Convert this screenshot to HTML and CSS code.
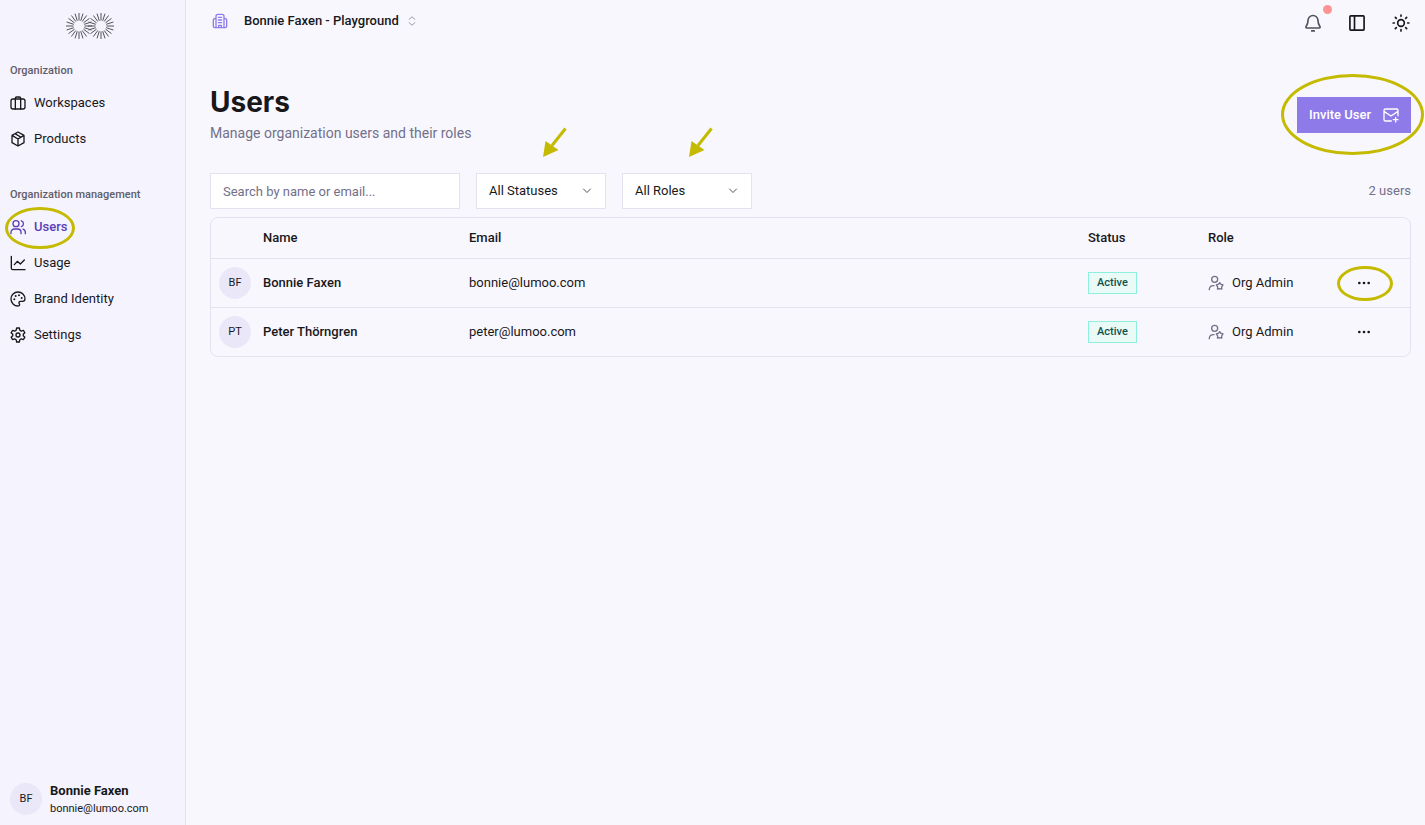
FILE: index.html
```html
<!DOCTYPE html>
<html lang="en">
<head>
    <meta charset="utf-8">
    <title>Users</title>
    <link rel="stylesheet" href="styles.css">
</head>
<body>
    <!-- Shared icon shapes -->
    <svg class="sprite" aria-hidden="true">
        <symbol id="icon-more" viewBox="0 0 24 24">
            <circle cx="5" cy="12" r="2"/><circle cx="12" cy="12" r="2"/><circle cx="19" cy="12" r="2"/>
        </symbol>
        <symbol id="icon-chevron" viewBox="0 0 24 24"><path d="m5 8 7 7 7-7"/></symbol>
        <symbol id="icon-user-star" viewBox="0 0 24 24">
            <circle cx="10" cy="6.5" r="4.5"/>
            <path d="M2 22v-1a6 6 0 0 1 6-5h1"/>
            <path d="m17.5 11.5 1.5 2.2 3.5 1-2 3 .2 3.5-3.2-.8-3.200.8.2-3.500-2-3 3.500-1z"/>
        </symbol>
        <symbol id="icon-arrow" viewBox="0 0 24 30">
            <path d="M22.500 1.500 9 18.500" fill="none" stroke="currentColor" stroke-width="3"/>
            <path d="M0 30 2.500 14 15.500 23z" fill="currentColor"/>
        </symbol>
        <symbol id="burst" viewBox="-14 -14 28 28">
            <g id="burst-quarter">
                <path d="M5.500 0H13M5.200 1.700 12.400 4M4.500 3.200 10.500 7.600M3.200 4.500 7.600 10.500M1.700 5.200 4 12.400"/>
            </g>
            <use href="#burst-quarter" transform="rotate(90)"/>
            <use href="#burst-quarter" transform="rotate(180)"/>
            <use href="#burst-quarter" transform="rotate(270)"/>
        </symbol>
    </svg>

    <div class="app">
        <aside class="sidebar">
            <svg class="logo" viewBox="0 0 50 28" role="img" aria-label="Lumoo">
                <use href="#burst" width="28" height="28"/>
                <use href="#burst" x="22" width="28" height="28"/>
            </svg>

            <nav>
                <h2 class="nav-title">Organization</h2>
                <a class="nav-link" href="#">
                    <svg class="icon" viewBox="0 0 24 24"><rect x="1.500" y="6" width="21" height="15" rx="3"/><path d="M8 21V5a2 2 0 0 1 2-2h4a2 2 0 0 1 2 2v16"/></svg>
                    Workspaces
                </a>
                <a class="nav-link" href="#">
                    <svg class="icon" viewBox="0 0 24 24"><path d="m12 1.500 9 5v11l-9 5-9-5v-11zM3 6.500 12 12l9-5.500M12 12v10M7.500 4l9 5.300"/></svg>
                    Products
                </a>

                <h2 class="nav-title nav-title-second">Organization management</h2>
                <a class="nav-link active" href="#">
                    <svg class="icon" viewBox="0 0 24 24"><circle cx="9" cy="7" r="4.500"/><path d="M1.500 22v-2a5 5 0 0 1 5-5h5a5 5 0 0 1 5 5v2M17 2.700a4.500 4.500 0 0 1 0 8.600M19.500 15.200a5 5 0 0 1 3.500 4.800v2"/></svg>
                    Users
                    <span class="ring ring-nav"></span>
                </a>
                <a class="nav-link" href="#">
                    <svg class="icon" viewBox="0 0 24 24"><path d="M2 2v18a2 2 0 0 0 2 2h18.500M6.500 14.500l4.500-5 4.500 4 6-6"/></svg>
                    Usage
                </a>
                <a class="nav-link" href="#">
                    <svg class="icon" viewBox="0 0 24 24"><path d="M12 22.500a10.500 10.500 0 1 1 10.500-10.500c0 2.500-2 3.500-4 3.500h-3a2.200 2.200 0 0 0-1.500 3.700c1 1.400.2 3.300-2 3.300z"/><g class="dots"><circle cx="6.500" cy="12.500" r="1.500"/><circle cx="8.500" cy="7.500" r="1.500"/><circle cx="13.500" cy="6.500" r="1.500"/><circle cx="17.500" cy="10.500" r="1.500"/></g></svg>
                    Brand Identity
                </a>
                <a class="nav-link" href="#">
                    <svg class="icon" viewBox="0 0 24 24"><path d="M10 1.500h4l.8 3.400 2.200 1.300 3.300-1 2 3.500L19.900 11v2l2.400 2.300-2 3.500-3.300-1-2.200 1.300-.8 3.400h-4l-.8-3.400L7 17.800l-3.300 1-2-3.500L4.100 13v-2L1.700 8.700l2-3.500 3.300 1 2.200-1.300z"/><circle cx="12" cy="12" r="3"/></svg>
                    Settings
                </a>
            </nav>

            <div class="account">
                <span class="avatar">BF</span>
                <div>
                    <div class="account-name">Bonnie Faxen</div>
                    <div class="account-email">bonnie@lumoo.com</div>
                </div>
            </div>
        </aside>

        <main class="main">
            <header class="topbar">
                <button class="switcher" type="button">
                    <svg class="icon building" viewBox="0 0 24 24"><path d="M6 22V5a3 3 0 0 1 3-3h6a3 3 0 0 1 3 3v17M6 8H5a3 3 0 0 0-3 3v9a2 2 0 0 0 2 2h16a2 2 0 0 0 2-2v-9a3 3 0 0 0-3-3h-1M9.500 6.500h5M9.500 10.500h5M9.500 14.500h5M10 22v-3.500h4V22"/></svg>
                    Bonnie Faxen - Playground
                    <svg class="icon up-down" viewBox="0 0 24 24"><path d="m5 8 7-6 7 6M5 16l7 6 7-6"/></svg>
                </button>
                <div class="tools">
                    <button class="tool bell" type="button" aria-label="Notifications">
                        <svg class="icon" viewBox="0 0 24 24"><path d="M12 3a6 6 0 0 0-6 6c0 4-1 5.500-2.300 7.200-.6.900-.2 1.800.8 1.800h15c1 0 1.400-.9.800-1.800C19 14.500 18 13 18 9a6 6 0 0 0-6-6zM10.500 21.500h3"/></svg>
                        <span class="dot"></span>
                    </button>
                    <button class="tool" type="button" aria-label="Toggle sidebar">
                        <svg class="icon" viewBox="0 0 24 24"><rect x="3.500" y="3.500" width="17" height="17" rx="1"/><path d="M9 3.500v17"/></svg>
                    </button>
                    <button class="tool" type="button" aria-label="Toggle theme">
                        <svg class="icon" viewBox="0 0 24 24"><circle cx="12" cy="12" r="4"/><path d="M12 2.500v1.500M12 20v1.500M2.500 12H4M20 12h1.500M5.200 5.200l1.200 1.200M17.600 17.600l1.200 1.200M5.200 18.800l1.200-1.200M17.600 6.400l1.200-1.200"/></svg>
                    </button>
                </div>
            </header>

            <section class="page-head">
                <div>
                    <h1>Users</h1>
                    <p>Manage organization users and their roles</p>
                </div>
                <button class="invite" type="button">
                    Invite User
                    <svg class="icon" viewBox="0 0 24 24"><path d="M12.500 21H3.500a2 2 0 0 1-2-2V5a2 2 0 0 1 2-2h17a2 2 0 0 1 2 2v8M2 7l10 6.500L22 7M19 15.500v7M15.500 19h7"/></svg>
                    <span class="ring ring-invite"></span>
                </button>
            </section>

            <div class="filters">
                <input class="search" type="text" placeholder="Search by name or email..." aria-label="Search users">
                <div class="select-box">
                    <select aria-label="Status">
                        <option>All Statuses</option>
                        <option>Active</option>
                    </select>
                    <svg class="icon chevron"><use href="#icon-chevron"/></svg>
                    <svg class="arrow"><use href="#icon-arrow"/></svg>
                </div>
                <div class="select-box">
                    <select aria-label="Role">
                        <option>All Roles</option>
                        <option>Org Admin</option>
                    </select>
                    <svg class="icon chevron"><use href="#icon-chevron"/></svg>
                    <svg class="arrow"><use href="#icon-arrow"/></svg>
                </div>
                <span class="count">2 users</span>
            </div>

            <div class="table-box">
                <table>
                    <thead>
                        <tr>
                            <th class="col-avatar"></th>
                            <th class="col-name">Name</th>
                            <th>Email</th>
                            <th class="col-status">Status</th>
                            <th class="col-role">Role</th>
                            <th class="col-actions"></th>
                        </tr>
                    </thead>
                    <tbody>
                        <tr>
                            <td><span class="avatar">BF</span></td>
                            <td class="name">Bonnie Faxen</td>
                            <td>bonnie@lumoo.com</td>
                            <td><span class="badge">Active</span></td>
                            <td><span class="role"><svg class="icon"><use href="#icon-user-star"/></svg>Org Admin</span></td>
                            <td>
                                <button class="more" type="button" aria-label="Actions for Bonnie Faxen">
                                    <svg class="icon"><use href="#icon-more"/></svg>
                                    <span class="ring ring-more"></span>
                                </button>
                            </td>
                        </tr>
                        <tr>
                            <td><span class="avatar">PT</span></td>
                            <td class="name">Peter Thörngren</td>
                            <td>peter@lumoo.com</td>
                            <td><span class="badge">Active</span></td>
                            <td><span class="role"><svg class="icon"><use href="#icon-user-star"/></svg>Org Admin</span></td>
                            <td>
                                <button class="more" type="button" aria-label="Actions for Peter Thörngren">
                                    <svg class="icon"><use href="#icon-more"/></svg>
                                </button>
                            </td>
                        </tr>
                    </tbody>
                </table>
            </div>
        </main>
    </div>
</body>
</html>
```
FILE: styles.css
```css
* {
    box-sizing: border-box;
}

body {
    margin: 0;
    background: #f8f7fd;
    color: #18181b;
    font-family: Roboto, sans-serif;
    font-size: 13px;
    line-height: 20px;
}

button,
input,
select {
    font: inherit;
    color: inherit;
}

button {
    border: 0;
    padding: 0;
    background: none;
    cursor: pointer;
}

.sprite {
    position: absolute;
    width: 0;
    height: 0;
}

.icon {
    width: 16px;
    height: 16px;
    flex: none;
    fill: none;
    stroke: currentColor;
    stroke-width: 2;
    stroke-linecap: round;
    stroke-linejoin: round;
}

.dots {
    fill: currentColor;
    stroke: none;
}

.app {
    display: flex;
    min-height: 100vh;
}

/* Sidebar */
.sidebar {
    display: flex;
    flex-direction: column;
    flex: none;
    width: 186px;
    padding: 12px 10px 8px;
    background: #f5f3fd;
    border-right: 1px solid #e4e2ee;
}

.logo {
    width: 50px;
    height: 28px;
    margin: 0 auto 20px 55px;
    stroke: #52525b;
    stroke-width: 1;
}

.nav-title {
    margin: 0 0 3px;
    color: #5f5d68;
    font-size: 11px;
    font-weight: 500;
    line-height: 22px;
}

.nav-title-second {
    margin-top: 27px;
}

.nav-link {
    display: flex;
    position: relative;
    align-items: center;
    gap: 8px;
    height: 36px;
    color: inherit;
    text-decoration: none;
}

.active {
    color: #5b3fb5;
    font-weight: 500;
}

.account {
    display: flex;
    align-items: center;
    gap: 8px;
    margin-top: auto;
}

.account-name {
    font-weight: 700;
}

.account-email {
    font-size: 11px;
    line-height: 16px;
}

.avatar {
    display: flex;
    align-items: center;
    justify-content: center;
    width: 32px;
    height: 32px;
    border-radius: 50%;
    background: #eae8f8;
    font-size: 11px;
}

/* Main column */
.main {
    flex: 1;
    min-width: 0;
    padding: 0 14px 24px 24px;
}

.topbar {
    display: flex;
    align-items: center;
    justify-content: space-between;
    height: 42px;
}

.switcher {
    display: flex;
    align-items: center;
    font-weight: 500;
}

.building {
    margin: 0 16px 0 2px;
    color: #8f7aea;
}

.up-down {
    width: 10px;
    height: 10px;
    margin-left: 8px;
    color: #8a8798;
}

.tools {
    display: flex;
    gap: 24px;
    padding-top: 3px;
}

.tool {
    display: flex;
    position: relative;
}

.tool .icon {
    width: 20px;
    height: 20px;
}

.bell {
    color: #52525b;
}

.dot {
    position: absolute;
    top: -8px;
    right: -9px;
    width: 9px;
    height: 9px;
    border-radius: 50%;
    background: #ff9393;
}

.page-head {
    display: flex;
    align-items: center;
    justify-content: space-between;
    margin-top: 42px;
}

h1 {
    margin: 0;
    font-family: Inter, sans-serif;
    font-size: 28px;
    font-weight: 700;
    line-height: 36px;
}

.page-head p {
    margin: 0;
    color: #737089;
    font-size: 14px;
    line-height: 26px;
}

.invite {
    display: flex;
    position: relative;
    align-items: center;
    gap: 12px;
    height: 36px;
    padding: 0 12px;
    background: #8f7aea;
    color: #fff;
    font-weight: 500;
}

.filters {
    display: flex;
    align-items: center;
    gap: 16px;
    margin: 27px 0 8px;
}

.search,
.select-box select {
    height: 36px;
    padding: 0 12px;
    border: 1px solid #e4e2ee;
    border-radius: 0;
    background: #fff;
}

.search {
    width: 250px;
}

.search::placeholder {
    color: #737089;
    opacity: 1;
}

.select-box {
    position: relative;
    width: 130px;
}

.select-box select {
    display: block;
    width: 100%;
    appearance: none;
}

.chevron {
    position: absolute;
    top: 12px;
    right: 13px;
    width: 12px;
    height: 12px;
    color: #52525b;
    pointer-events: none;
}

.count {
    margin-left: auto;
    color: #737089;
}

/* Users table */
.table-box {
    border: 1px solid #e4e2ee;
    border-radius: 8px;
}

table {
    width: 100%;
    border-collapse: collapse;
    table-layout: fixed;
}

th,
td {
    height: 49px;
    padding: 0 8px;
    text-align: left;
    vertical-align: middle;
}

th {
    height: 40px;
    font-weight: 500;
}

tbody tr {
    border-top: 1px solid #e4e2ee;
}

.col-avatar {
    width: 44px;
}

.col-name {
    width: 206px;
}

.col-status,
.col-role {
    width: 120px;
}

.col-actions {
    width: 90px;
}

.name {
    font-weight: 500;
}

.badge {
    display: inline-block;
    padding: 0 8px;
    border: 1px solid #8df0dc;
    background: #e9faf7;
    color: #12524a;
    font-size: 11px;
    font-weight: 500;
    vertical-align: middle;
}

.role {
    display: flex;
    align-items: center;
    gap: 8px;
    white-space: nowrap;
}

.role .icon {
    color: #737089;
}

.more {
    display: flex;
    position: relative;
    align-items: center;
    justify-content: center;
    width: 32px;
    height: 32px;
    margin-left: 20px;
}

.more .icon {
    fill: currentColor;
    stroke: none;
}

/* Highlight marks */
.ring {
    position: absolute;
    border: 3px solid #c4ba00;
    border-radius: 50%;
    pointer-events: none;
}

.ring-nav {
    top: -2px;
    left: -5px;
    width: 70px;
    height: 42px;
}

.ring-invite {
    inset: -23px -13px -22px -16px;
}

.ring-more {
    inset: -1px -13px -2px -11px;
}

.arrow {
    position: absolute;
    top: -46px;
    left: 67px;
    width: 24px;
    height: 30px;
    color: #c4ba00;
    pointer-events: none;
}
```
